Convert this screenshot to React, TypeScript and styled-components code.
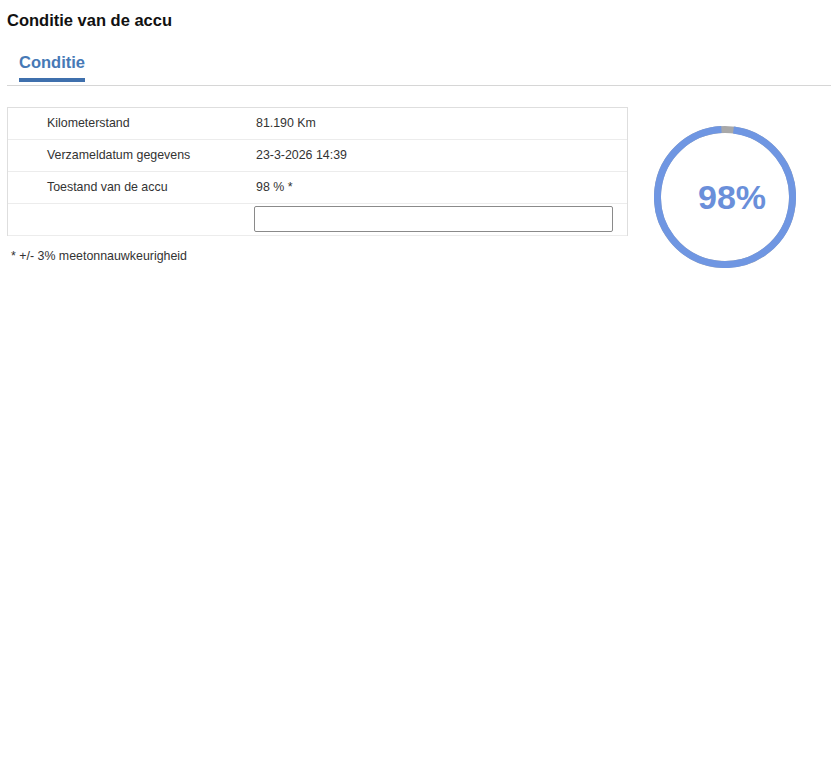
import React from "react";
import styled, { createGlobalStyle } from "styled-components";

const Global = createGlobalStyle`
  html, body { margin: 0; padding: 0; background: #ffffff; }
  body { font-family: "Liberation Sans", Arial, sans-serif; color: #222; }
`;

const Page = styled.div`
  padding: 11px 0 0 7px;
`;

const Title = styled.h1`
  margin: 0;
  font-size: 16.5px;
  font-weight: bold;
  line-height: 19px;
  color: #111;
`;

const TabBar = styled.div`
  margin-top: 23px;
  display: flex;
  border-bottom: 1px solid #d6d6d6;
  padding-left: 12px;
`;

const Tab = styled.div<{ $active?: boolean }>`
  font-size: 16.5px;
  font-weight: bold;
  line-height: 19px;
  color: ${(p) => (p.$active ? "#4679b6" : "#666")};
  padding: 0 0 6px;
  border-bottom: 4px solid ${(p) => (p.$active ? "#3f70ad" : "transparent")};
  margin-bottom: 3px;
`;

const Content = styled.div`
  margin-top: 21px;
  display: flex;
  align-items: flex-start;
  gap: 26px;
`;

const Left = styled.div`
  display: flex;
  flex-direction: column;
`;

const Table = styled.div`
  width: 619px;
  border: 1px solid #dedede;
  border-bottom: none;
`;

const Row = styled.div`
  display: grid;
  grid-template-columns: 246px 1fr;
  height: 31px;
  border-bottom: 1px solid #ececec;
  align-items: center;
  font-size: 12.4px;
  color: #333;
`;

const Label = styled.div`
  padding-left: 39px;
  margin-top: -2px;
`;

const Value = styled.div`
  padding-left: 2px;
  padding-right: 14px;
  margin-top: -2px;
`;

const InputCell = styled.div`
  padding-right: 14px;
  margin-top: -2px;
`;

const Box = styled.input`
  box-sizing: border-box;
  width: 359px;
  height: 26px;
  border: 1px solid #8a8a8a;
  border-radius: 2px;
  display: block;
  background: #fff;
`;

const Note = styled.div`
  margin-top: 13px;
  padding-left: 4px;
  font-size: 12.4px;
  color: #333;
`;

const Gauge = styled.div`
  position: relative;
  width: 142px;
  height: 142px;
  margin-top: 19px;
`;

const GaugeText = styled.div`
  position: absolute;
  inset: 0;
  display: flex;
  align-items: center;
  justify-content: center;
  font-size: 34px;
  font-weight: bold;
  color: #6a8fda;
  padding-left: 14px;
  padding-top: 1px;
`;

const rows = [
  { label: "Kilometerstand", value: "81.190 Km" },
  { label: "Verzameldatum gegevens", value: "23-3-2026 14:39" },
  { label: "Toestand van de accu", value: "98 % *" },
];

export default function App() {
  const pct = 98;
  const r = 67.5;
  const c = 2 * Math.PI * r;
  return (
    <>
      <Global />
      <Page>
        <Title>Conditie van de accu</Title>
        <TabBar>
          <Tab $active>Conditie</Tab>
        </TabBar>
        <Content>
          <Left>
            <Table>
              {rows.map((row) => (
                <Row key={row.label}>
                  <Label>{row.label}</Label>
                  <Value>{row.value}</Value>
                </Row>
              ))}
              <Row>
                <Label />
                <InputCell>
                  <Box type="text" />
                </InputCell>
              </Row>
            </Table>
            <Note>* +/- 3% meetonnauwkeurigheid</Note>
          </Left>
          <Gauge>
            <svg width="142" height="142" viewBox="0 0 142 142">
              <circle cx="71" cy="71" r={r} fill="none" stroke="#a8a8a8" strokeWidth="7" />
              <circle
                cx="71"
                cy="71"
                r={r}
                fill="none"
                stroke="#6f96e2"
                strokeWidth="7"
                strokeDasharray={`${(c * (pct - 1)) / 100} ${c}`}
                transform="rotate(-82.8 71 71)"
              />
            </svg>
            <GaugeText>{pct}%</GaugeText>
          </Gauge>
        </Content>
      </Page>
    </>
  );
}
